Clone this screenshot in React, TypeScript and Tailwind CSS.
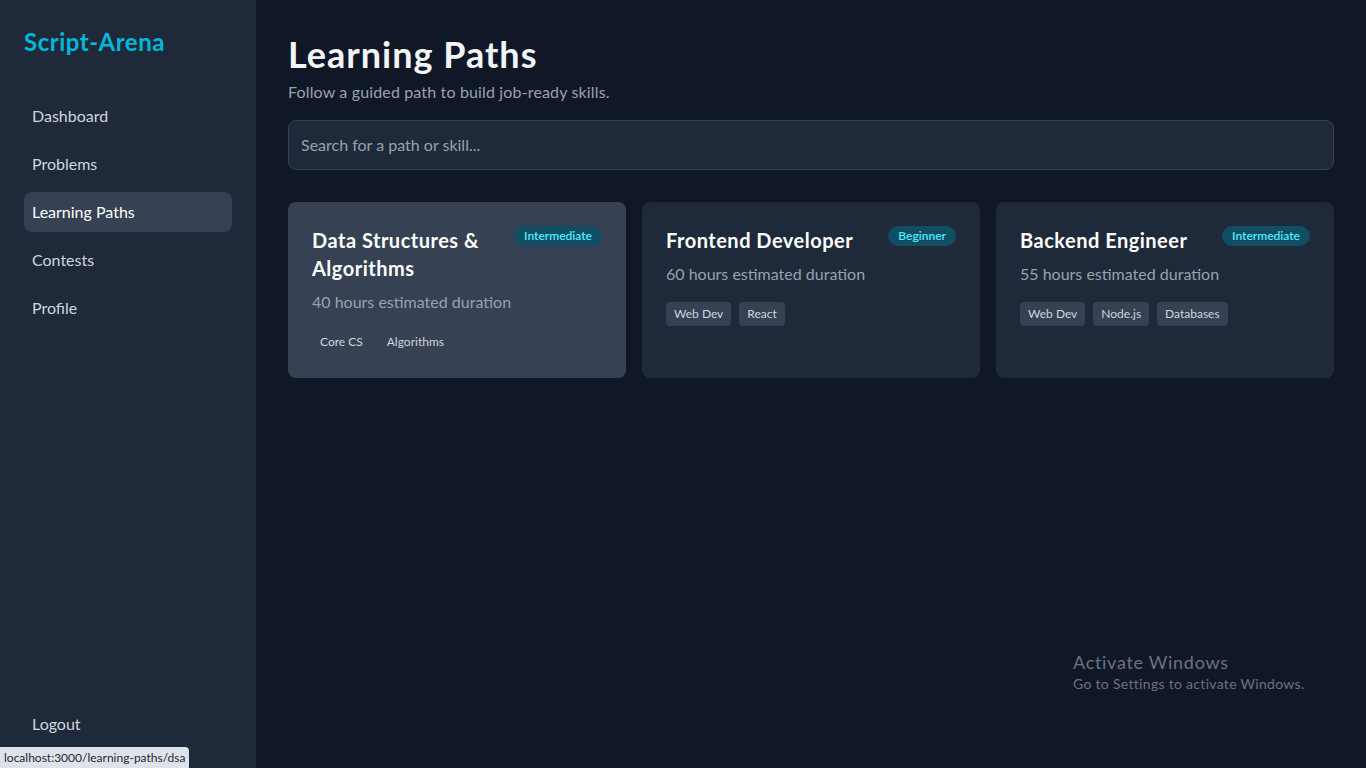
const NAV = ['Dashboard', 'Problems', 'Learning Paths', 'Contests', 'Profile']

const PATHS = [
  {
    id: 'dsa',
    title: 'Data Structures & Algorithms',
    level: 'Intermediate',
    hours: 40,
    tags: ['Core CS', 'Algorithms'],
    hovered: true,
  },
  {
    id: 'frontend',
    title: 'Frontend Developer',
    level: 'Beginner',
    hours: 60,
    tags: ['Web Dev', 'React'],
  },
  {
    id: 'backend',
    title: 'Backend Engineer',
    level: 'Intermediate',
    hours: 55,
    tags: ['Web Dev', 'Node.js', 'Databases'],
  },
]

function Sidebar() {
  return (
    <aside className="flex w-64 shrink-0 flex-col bg-gray-800 p-6">
      <h2 className="mt-0.5 mb-[38px] text-2xl font-bold tracking-[0.5px] text-cyan-500">Script-Arena</h2>
      <nav className="flex flex-col gap-2">
        {NAV.map((item) => (
          <a
            key={item}
            href="#"
            className={
              item === 'Learning Paths'
                ? 'rounded-lg bg-gray-700 px-2 py-2 text-base text-white'
                : 'rounded-lg px-2 py-2 text-base text-gray-300'
            }
          >
            {item}
          </a>
        ))}
      </nav>
      <div className="mt-auto">
        <a href="#" className="block px-2 py-2 text-base text-gray-300">
          Logout
        </a>
      </div>
    </aside>
  )
}

function PathCard({ path }: { path: (typeof PATHS)[number] }) {
  return (
    <div
      className={
        path.hovered
          ? 'rounded-lg bg-gray-700 p-6'
          : 'rounded-lg bg-gray-800 p-6'
      }
    >
      <div className="flex items-start justify-between gap-4">
        <h3 className="text-xl font-bold tracking-[0.5px] text-white">{path.title}</h3>
        <span className="shrink-0 rounded-full bg-cyan-900 px-2.5 py-0.5 text-xs font-semibold text-cyan-300">
          {path.level}
        </span>
      </div>
      <p className="mt-2 text-base text-gray-400">{path.hours} hours estimated duration</p>
      <div className="mt-4 flex flex-wrap gap-2">
        {path.tags.map((tag) => (
          <span key={tag} className="rounded bg-gray-700 px-2 py-1 text-xs text-gray-300">
            {tag}
          </span>
        ))}
      </div>
    </div>
  )
}

export default function App() {
  return (
    <div className="relative flex h-[768px] w-full overflow-hidden bg-gray-900 font-['Lato',sans-serif]">
      <Sidebar />

      <main className="flex-1 p-8">
        <h1 className="mt-0.5 -mb-0.5 text-4xl font-bold tracking-[1px] text-gray-100">Learning Paths</h1>
        <p className="mt-2 text-base tracking-[0.15px] text-gray-400">Follow a guided path to build job-ready skills.</p>

        <input
          type="text"
          placeholder="Search for a path or skill..."
          className="mt-4 w-full rounded-lg border border-gray-700 bg-gray-800 px-3 py-3 text-base text-gray-200 placeholder:text-gray-400 focus:outline-none"
        />

        <div className="mt-8 grid grid-cols-3 gap-4">
          {PATHS.map((p) => (
            <PathCard key={p.id} path={p} />
          ))}
        </div>
      </main>

      {/* Windows activation watermark */}
      <div className="pointer-events-none absolute left-[1073px] top-[650px] text-gray-500">
        <p className="text-lg leading-6 tracking-[0.7px]">Activate Windows</p>
        <p className="text-sm tracking-[0.3px]">Go to Settings to activate Windows.</p>
      </div>

      {/* Browser status bubble */}
      <div className="absolute bottom-0 left-0 rounded-tr bg-[#dee3ea] px-1 py-[3px] text-xs leading-[15px] text-gray-800">
        localhost:3000/learning-paths/dsa
      </div>
    </div>
  )
}
